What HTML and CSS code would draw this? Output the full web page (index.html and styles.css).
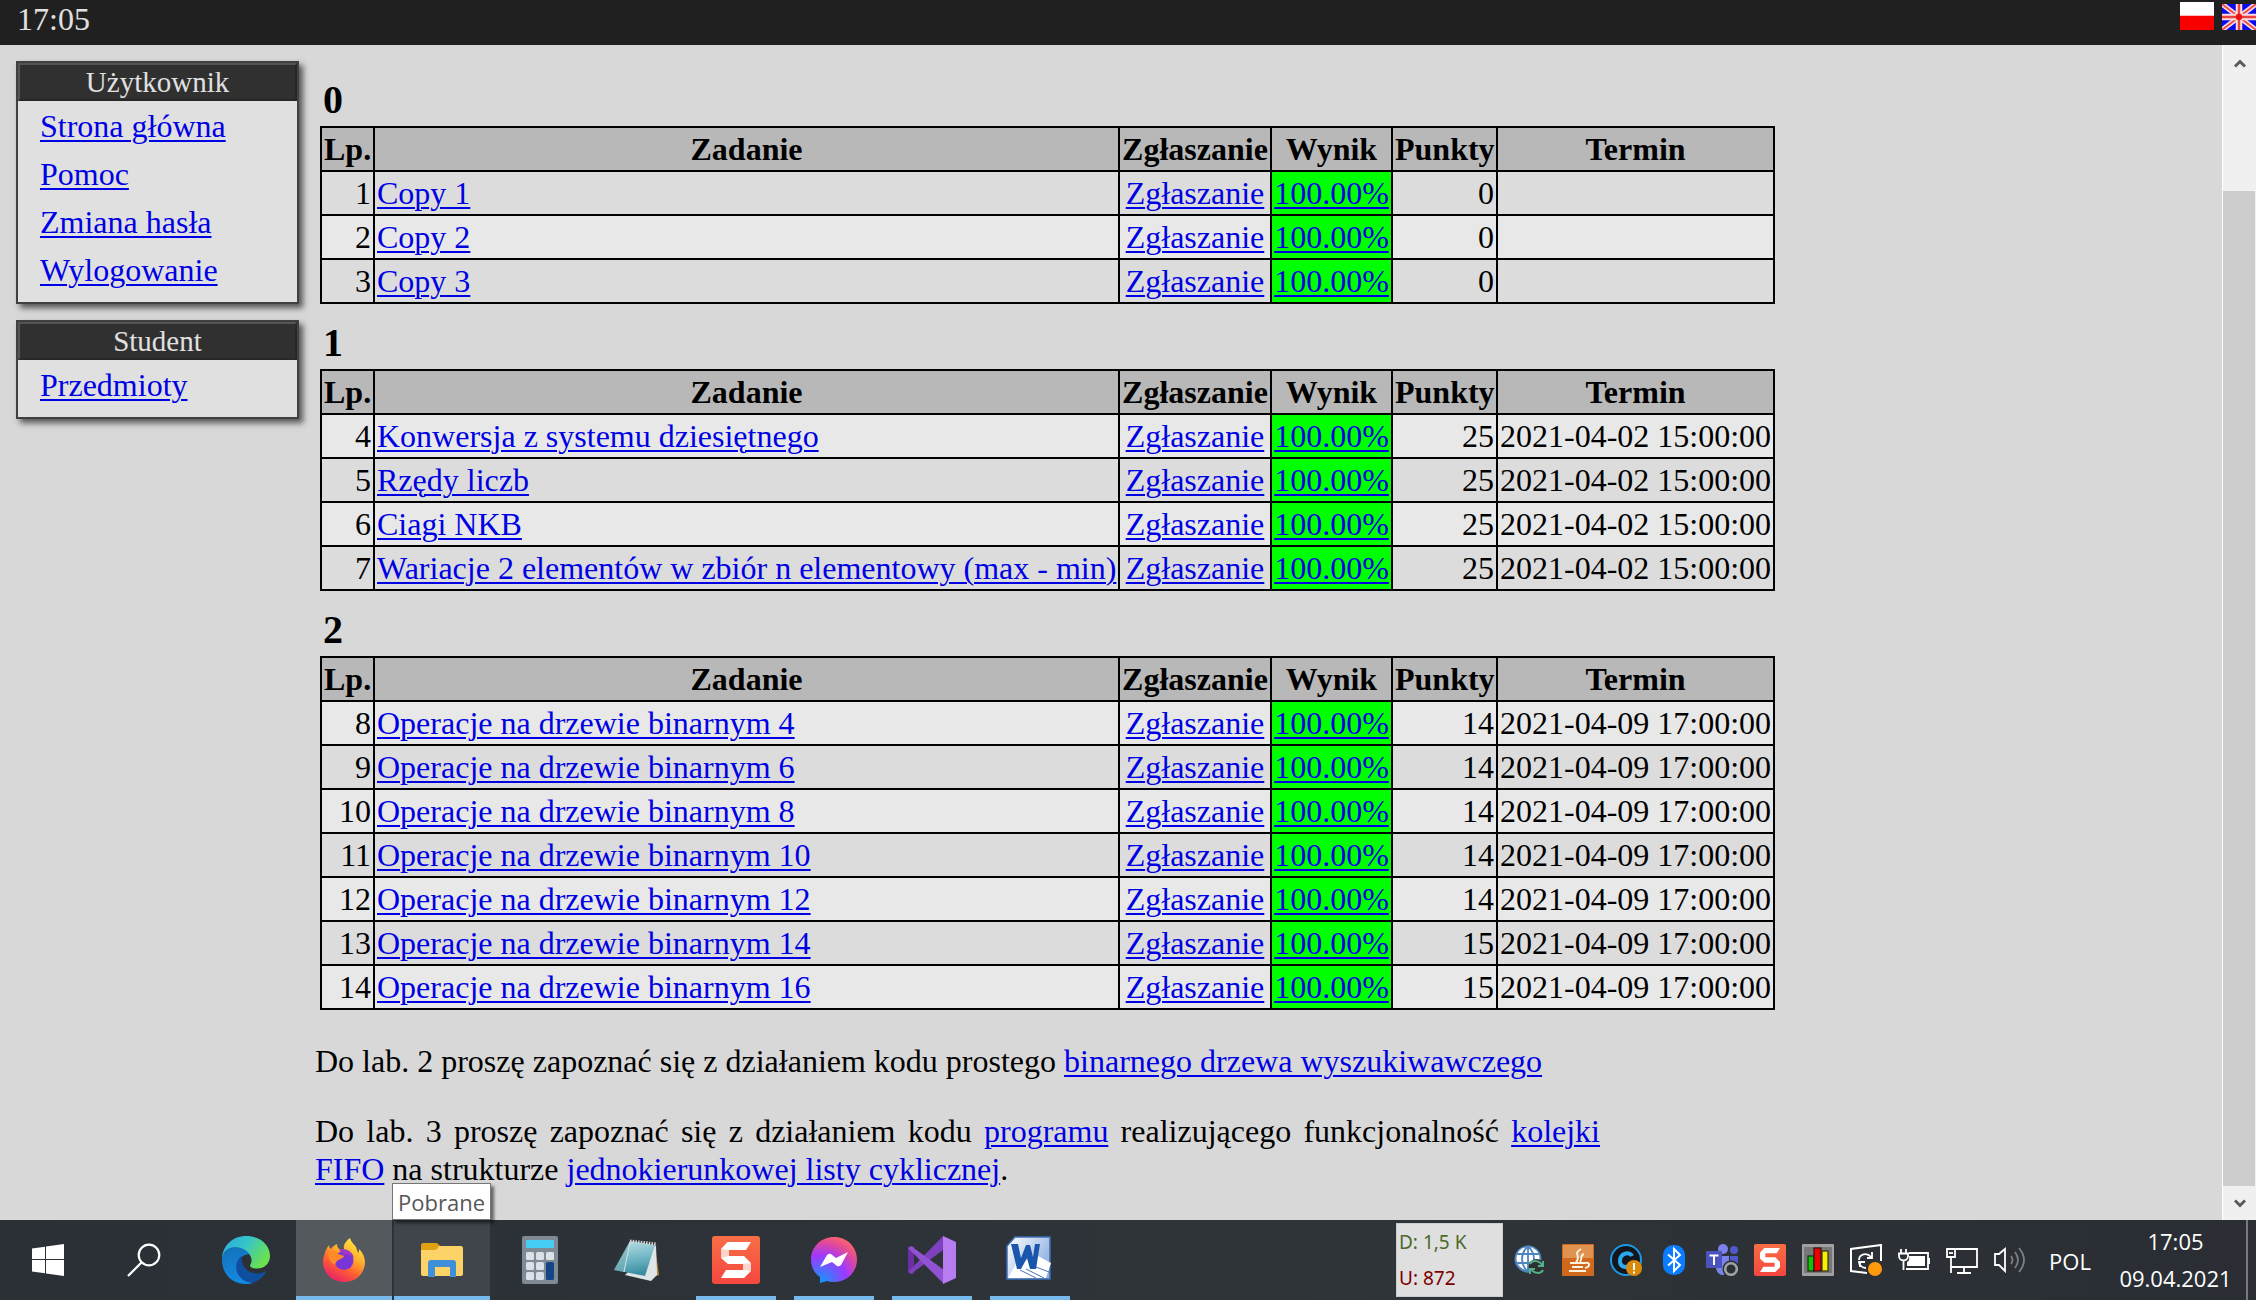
FILE: index.html
```html
<!DOCTYPE html>
<html lang="pl">
<head>
<meta charset="utf-8">
<title>Zadania</title>
<link rel="stylesheet" href="styles.css">
</head>
<body>
<header class="topbar">
  <span class="topbar-time">17:05</span>
  <div class="flags">
    <svg class="flag-pl" viewBox="0 0 34 28"><rect width="34" height="28" fill="#f90000"/><rect width="34" height="14" fill="#fff"/><rect y="13" width="34" height="1" fill="#fbb"/></svg>
    <svg class="flag-uk" viewBox="0 0 34 26"><rect width="34" height="26" fill="#0a0af0"/><path d="M0 0L34 26M34 0L0 26" stroke="#fbdcdc" stroke-width="5"/><path d="M0 0L34 26M34 0L0 26" stroke="#ee4a4a" stroke-width="1.8"/><path d="M17 0V26M0 13H34" stroke="#fbdcdc" stroke-width="6.5"/><path d="M17 0V26M0 13H34" stroke="#ee4040" stroke-width="2.400"/><circle cx="17" cy="13" r="3.2" fill="#f01010"/></svg>
  </div>
</header>
<div class="page">
  <nav class="sidebar">
    <section class="menu">
      <h2 class="menu-title">Użytkownik</h2>
      <ul class="menu-list">
        <li><a href="#">Strona główna</a></li>
        <li><a href="#">Pomoc</a></li>
        <li><a href="#">Zmiana hasła</a></li>
        <li><a href="#">Wylogowanie</a></li>
      </ul>
    </section>
    <section class="menu">
      <h2 class="menu-title">Student</h2>
      <ul class="menu-list">
        <li><a href="#">Przedmioty</a></li>
      </ul>
    </section>
  </nav>
  <main class="content">
    <h3 class="group">0</h3>
    <table class="tasks">
      <colgroup><col class="c-lp"><col class="c-task"><col class="c-send"><col class="c-res"><col class="c-pts"><col class="c-date"></colgroup>
      <tr><th>Lp.</th><th>Zadanie</th><th>Zgłaszanie</th><th>Wynik</th><th>Punkty</th><th>Termin</th></tr>
      <tr class="odd"><td class="num">1</td><td><a href="#">Copy 1</a></td><td class="mid"><a href="#">Zgłaszanie</a></td><td class="ok"><a href="#">100.00%</a></td><td class="num">0</td><td></td></tr>
      <tr><td class="num">2</td><td><a href="#">Copy 2</a></td><td class="mid"><a href="#">Zgłaszanie</a></td><td class="ok"><a href="#">100.00%</a></td><td class="num">0</td><td></td></tr>
      <tr class="odd"><td class="num">3</td><td><a href="#">Copy 3</a></td><td class="mid"><a href="#">Zgłaszanie</a></td><td class="ok"><a href="#">100.00%</a></td><td class="num">0</td><td></td></tr>
    </table>
    <h3 class="group">1</h3>
    <table class="tasks">
      <colgroup><col class="c-lp"><col class="c-task"><col class="c-send"><col class="c-res"><col class="c-pts"><col class="c-date"></colgroup>
      <tr><th>Lp.</th><th>Zadanie</th><th>Zgłaszanie</th><th>Wynik</th><th>Punkty</th><th>Termin</th></tr>
      <tr><td class="num">4</td><td><a href="#">Konwersja z systemu dziesiętnego</a></td><td class="mid"><a href="#">Zgłaszanie</a></td><td class="ok"><a href="#">100.00%</a></td><td class="num">25</td><td>2021-04-02 15:00:00</td></tr>
      <tr class="odd"><td class="num">5</td><td><a href="#">Rzędy liczb</a></td><td class="mid"><a href="#">Zgłaszanie</a></td><td class="ok"><a href="#">100.00%</a></td><td class="num">25</td><td>2021-04-02 15:00:00</td></tr>
      <tr><td class="num">6</td><td><a href="#">Ciagi NKB</a></td><td class="mid"><a href="#">Zgłaszanie</a></td><td class="ok"><a href="#">100.00%</a></td><td class="num">25</td><td>2021-04-02 15:00:00</td></tr>
      <tr class="odd"><td class="num">7</td><td><a href="#">Wariacje 2 elementów w zbiór n elementowy (max - min)</a></td><td class="mid"><a href="#">Zgłaszanie</a></td><td class="ok"><a href="#">100.00%</a></td><td class="num">25</td><td>2021-04-02 15:00:00</td></tr>
    </table>
    <h3 class="group">2</h3>
    <table class="tasks">
      <colgroup><col class="c-lp"><col class="c-task"><col class="c-send"><col class="c-res"><col class="c-pts"><col class="c-date"></colgroup>
      <tr><th>Lp.</th><th>Zadanie</th><th>Zgłaszanie</th><th>Wynik</th><th>Punkty</th><th>Termin</th></tr>
      <tr><td class="num">8</td><td><a href="#">Operacje na drzewie binarnym 4</a></td><td class="mid"><a href="#">Zgłaszanie</a></td><td class="ok"><a href="#">100.00%</a></td><td class="num">14</td><td>2021-04-09 17:00:00</td></tr>
      <tr class="odd"><td class="num">9</td><td><a href="#">Operacje na drzewie binarnym 6</a></td><td class="mid"><a href="#">Zgłaszanie</a></td><td class="ok"><a href="#">100.00%</a></td><td class="num">14</td><td>2021-04-09 17:00:00</td></tr>
      <tr><td class="num">10</td><td><a href="#">Operacje na drzewie binarnym 8</a></td><td class="mid"><a href="#">Zgłaszanie</a></td><td class="ok"><a href="#">100.00%</a></td><td class="num">14</td><td>2021-04-09 17:00:00</td></tr>
      <tr class="odd"><td class="num">11</td><td><a href="#">Operacje na drzewie binarnym 10</a></td><td class="mid"><a href="#">Zgłaszanie</a></td><td class="ok"><a href="#">100.00%</a></td><td class="num">14</td><td>2021-04-09 17:00:00</td></tr>
      <tr><td class="num">12</td><td><a href="#">Operacje na drzewie binarnym 12</a></td><td class="mid"><a href="#">Zgłaszanie</a></td><td class="ok"><a href="#">100.00%</a></td><td class="num">14</td><td>2021-04-09 17:00:00</td></tr>
      <tr class="odd"><td class="num">13</td><td><a href="#">Operacje na drzewie binarnym 14</a></td><td class="mid"><a href="#">Zgłaszanie</a></td><td class="ok"><a href="#">100.00%</a></td><td class="num">15</td><td>2021-04-09 17:00:00</td></tr>
      <tr><td class="num">14</td><td><a href="#">Operacje na drzewie binarnym 16</a></td><td class="mid"><a href="#">Zgłaszanie</a></td><td class="ok"><a href="#">100.00%</a></td><td class="num">15</td><td>2021-04-09 17:00:00</td></tr>
    </table>
    <p class="note">Do lab. 2 proszę zapoznać się z działaniem kodu prostego <a href="#">binarnego drzewa wyszukiwawczego</a></p>
    <p class="note">Do lab. 3 proszę zapoznać się z działaniem kodu <a href="#">programu</a> realizującego funkcjonalność <a href="#">kolejki FIFO</a> na strukturze <a href="#">jednokierunkowej listy cyklicznej</a>.</p>
  </main>
  <div class="scrollbar">
    <svg class="sb-arrow" viewBox="0 0 12 10"><path d="M1 8.5L6 3.5L11 8.5" fill="none" stroke="#5a5a5a" stroke-width="3"/></svg>
    <div class="thumb"></div>
    <svg class="sb-arrow" viewBox="0 0 12 10"><path d="M1 1.5L6 6.5L11 1.5" fill="none" stroke="#5a5a5a" stroke-width="3"/></svg>
  </div>
</div>
<footer class="taskbar">
  <div class="sys">
    <svg width="32" height="32" viewBox="0 0 32 32" fill="#fff"><path d="M0 4.6L13 2.8V15H0ZM14 2.6L32 0V15H14ZM0 16H13V29.2L0 27.4ZM14 16H32V32L14 29.4Z"/></svg>
  </div>
  <div class="sys">
    <svg width="34" height="34" viewBox="0 0 34 34" fill="none" stroke="#fff" stroke-width="2.2"><circle cx="22" cy="12" r="10.3"/><path d="M14.5 19.5L1 33"/></svg>
  </div>
  <div class="apps">
    <div class="app">
      <svg width="48" height="48" viewBox="0 0 48 48">
        <defs>
          <linearGradient id="eg" x1="0" y1="0" x2="1" y2="0.5"><stop offset="0" stop-color="#2fa8e0"/><stop offset=".5" stop-color="#35c5c8"/><stop offset="1" stop-color="#6be050"/></linearGradient>
          <linearGradient id="eb" x1="0" y1="0" x2="0.3" y2="1"><stop offset="0" stop-color="#1470b8"/><stop offset="1" stop-color="#1389e0"/></linearGradient>
        </defs>
        <path d="M0 22C1 9 11 0 24 0C38 0 48 9 48 20C48 28 42 32.5 35 32.5C30 32.5 27.5 31 28 29C30 27 30.5 22 27 18C22 12 5 12 0 22Z" fill="url(#eg)"/>
        <path d="M0 24C0 16 6 11 13 11C20 11 26 15 28 19C22 17 18 22 18 27C18 37 26 46 31 47C28 48 26 48 24 48C10 48 0 38 0 24Z" fill="url(#eb)"/>
        <path d="M20 20C11 25 11 44 30 47C37 45 42 40 44 36C43 35 42 36 41 36.4C31 40 18 34 20 20Z" fill="#0f4fa0"/>
      </svg>
    </div>
    <div class="app active current">
      <svg width="42" height="44" viewBox="0 0 42 44">
        <defs><linearGradient id="ff" x1="0.85" y1="0" x2="0.3" y2="1"><stop offset="0" stop-color="#fff44a"/><stop offset=".4" stop-color="#ffae2a"/><stop offset=".7" stop-color="#ff5a35"/><stop offset="1" stop-color="#e8206c"/></linearGradient></defs>
        <path d="M1 18C2 14 3 11 6 7C6 9 7 10 8 11C10 8 12 7 14 6C14 9 15 11 18 12C20 12 21 11 21 11C20 7 23 3 27 0C28 4 31 6 33 9L35 15C36 14 36 12 36 11C41 16 42 21 42 25C41 37 32 44 21 44C9 44 0 35 0 24C0 22 0 20 1 18Z" fill="url(#ff)"/>
        <circle cx="21" cy="22.5" r="9.5" fill="#7a35d8"/>
        <path d="M16 12C22 9 30 14 31 20C28 17 24 16 21 17Z" fill="#a236c8"/>
        <path d="M5 14C9 11 14 13 15 16C17 17 20 17 21 18C20 21 16 21 14 23C12 26 11 27 11 27C8 24 5 20 5 14Z" fill="#ff8a28"/>
      </svg>
    </div>
    <div class="app active hover">
      <svg width="42" height="34" viewBox="0 0 42 34">
        <path d="M0 2Q0 0 2 0H15Q17 0 18 2L20 4V10H0Z" fill="#dea112"/>
        <path d="M0 7H14Q17 6 18 3H40Q42 3 42 5V31Q42 33 40 33H2Q0 33 0 31Z" fill="#fdd367"/>
        <path d="M7 34V20Q7 17 10 17H32Q35 17 35 20V34H29V24H14V34Z" fill="#3f90d8"/>
      </svg>
      <span class="tooltip">Pobrane</span>
    </div>
    <div class="app">
      <svg width="36" height="48" viewBox="0 0 36 48">
        <rect width="36" height="48" rx="2" fill="#7f8a94"/><rect x="4" y="4" width="28" height="8" rx="1" fill="#45cdf5"/>
        <g fill="#dbe1e8"><rect x="4" y="16" width="8" height="8" rx="1.5"/><rect x="14" y="16" width="8" height="8" rx="1.5"/><rect x="24" y="16" width="8" height="8" rx="1.5"/><rect x="4" y="26" width="8" height="8" rx="1.5"/><rect x="14" y="26" width="8" height="8" rx="1.5"/><rect x="4" y="36" width="8" height="8" rx="1.5"/><rect x="14" y="36" width="8" height="8" rx="1.5"/></g>
        <rect x="24" y="26" width="8" height="18" rx="1.5" fill="#144584"/>
      </svg>
    </div>
    <div class="app">
      <svg class="notepad" width="46" height="42" viewBox="0 0 46 42">
        <defs><linearGradient id="np" x1="0" y1="0" x2="0.2" y2="1"><stop offset="0" stop-color="#bfe0e6"/><stop offset=".6" stop-color="#6fb5c4"/><stop offset="1" stop-color="#3b8fa2"/></linearGradient></defs>
        <path d="M41 7L45 36L38 38Z" fill="#b58b43"/><path d="M42 6L43 36L37 42L11 36Z" fill="#dfe5e6"/>
        <path d="M16 2L41 6L31 37L0 31Z" fill="url(#np)"/><path d="M16 3L10 33L0 31Z" fill="#7fb0b8" opacity=".6"/><path d="M16 3L10 33" stroke="#cfe6ea"/>
        <path d="M16 2L42 5" stroke="#d5d5d5" stroke-width="3" stroke-dasharray="1.5 1.2"/>
      </svg>
    </div>
    <div class="app active">
      <svg width="48" height="48" viewBox="0 0 48 48">
        <defs><linearGradient id="sn" x1="0" y1="0" x2="0" y2="1"><stop offset="0" stop-color="#f86e45"/><stop offset="1" stop-color="#f5473f"/></linearGradient></defs>
        <rect width="48" height="48" rx="3" fill="url(#sn)"/>
        <path d="M9 13L15.5 6H39L34 14H17V20H32L39 27V35L32 42H9L14 34H31V28H16L9 22Z" fill="#fff"/>
        <path d="M9 13L17 14V20L9 22Z" fill="#fbd5cc"/><path d="M31 28L39 27V35L31 34Z" fill="#fbd5cc"/>
      </svg>
    </div>
    <div class="app active">
      <svg width="46" height="46" viewBox="0 0 46 46">
        <defs><radialGradient id="ms" cx=".2" cy="1" r="1.1"><stop offset="0" stop-color="#0a9bff"/><stop offset=".55" stop-color="#a038ff"/><stop offset=".8" stop-color="#e0489c"/><stop offset="1" stop-color="#ff6668"/></radialGradient></defs>
        <path d="M23 0C36 0 46 10 46 22.5S36 45 23 45C20 45 18 44.8 16 44L9 46V40C3 36 0 30 0 22.5C0 10 10 0 23 0Z" fill="url(#ms)"/>
        <path d="M9 30L16 18Q18 16 20 17L25 21L37 15L30 28Q28 30 26 29L21 25Z" fill="#fff"/>
      </svg>
    </div>
    <div class="app active">
      <svg width="48" height="48" viewBox="0 0 48 48">
        <path d="M0 12L6 10V38L0 36Z" fill="#6a2fa5"/><path d="M3 38L0 36L35 0V14Z" fill="#7e40be"/><path d="M0 12L3 10L36 34V48Z" fill="#9153d4"/><path d="M35 0L48 6V42L35 48Z" fill="#b77df0"/>
      </svg>
    </div>
    <div class="app active">
      <svg class="word" width="46" height="44" viewBox="0 0 46 44">
        <defs><linearGradient id="wd" x1="0" y1="0" x2="1" y2="0.6"><stop offset="0" stop-color="#fff"/><stop offset="1" stop-color="#8eb0e2"/></linearGradient></defs>
        <path d="M1 10L9 1H44V43H1Z" fill="url(#wd)" stroke="#3c6db8" stroke-width="1.5"/><path d="M32 20L45 27L40 42H2L10 28Z" fill="#fff"/><path d="M14 34L30 42M30 31L43 36M20 33L38 42" stroke="#496fb5"/>
        <path d="M5 8H12L15 22L20 9H24L27 21L29 8H34L30 33H24L21 22L15 33H11Z" fill="#1b56ad"/>
      </svg>
    </div>
  </div>
  <div class="net"><span class="down">D: 1,5 K</span><span class="up">U: 872</span></div>
  <div class="tray">
    <svg viewBox="0 0 32 32"><circle cx="14" cy="15" r="13.5" fill="#4e86bf"/><circle cx="14" cy="14.5" r="11.5" fill="#fff"/><path d="M14 2V28M2 10H26M2 19H26M14 2C6 10 6 20 14 28M14 2C22 10 22 20 14 28" stroke="#4e86bf" stroke-width="1.8" fill="none"/><circle cx="22.5" cy="23" r="8" fill="#2d3035"/><path d="M16 20C18 16 25 16 28 21M29 17V22H24M29 26C27 30 20 30 17 25M16 30V25H21" fill="none" stroke="#55b088" stroke-width="2"/></svg>
    <svg viewBox="0 0 32 32"><rect width="32" height="32" rx="1" fill="#d0691b"/><rect x="1" y="1" width="30" height="13" fill="#e09350"/><path d="M19 5C10 10 20 12 14 18M22 10C17 12 21 14 18 18M8 19H23M10 23H21M7 27H24M23 19C29 18 28 23 23 24" stroke="#fff1e0" stroke-width="2" fill="none"/></svg>
    <svg viewBox="0 0 32 32"><circle cx="16" cy="16" r="15" fill="#14161b" stroke="#1a9ae8" stroke-width="2"/><path d="M22 12C20 7 10 9 10 17C10 24 17 24 20 21" fill="none" stroke="#29a9f2" stroke-width="4"/><circle cx="24" cy="24" r="8" fill="#d98a0c"/><path d="M24 19V26M24 27.5V29.5" stroke="#fff" stroke-width="2"/></svg>
    <svg viewBox="0 0 32 32"><rect x="5" y="1" width="22" height="30" rx="10" fill="#0a7cff"/><path d="M10 10.5L22 21L16 27V5L22 11L10 21.5" fill="none" stroke="#fff" stroke-width="2"/></svg>
    <svg viewBox="0 0 32 32"><circle cx="17" cy="5" r="5" fill="#7b83eb"/><circle cx="28" cy="6" r="4" fill="#5059c9"/><path d="M12 12H23V26Q20 31 16 31Q11 30 10 24Z" fill="#7b83eb"/><path d="M24 12H32V20Q29 26 24 22Z" fill="#5059c9"/><rect x="0" y="7" width="16" height="17" rx="1" fill="#4b53bc"/><path d="M3.5 11.5H12.5M8 11.5V21" stroke="#fff" stroke-width="2"/><circle cx="25" cy="25" r="8.5" fill="#2c3035"/><circle cx="25" cy="25" r="5.8" fill="none" stroke="#a0a3a6" stroke-width="2.5"/></svg>
    <svg viewBox="0 0 48 48"><rect width="48" height="48" rx="3" fill="url(#sn)"/><path d="M9 13L15.5 6H39L34 14H17V20H32L39 27V35L32 42H9L14 34H31V28H16L9 22Z" fill="#fff"/></svg>
    <svg viewBox="0 0 32 32"><rect width="32" height="32" rx="1" fill="#a0a0a0"/><rect x="2" y="3" width="28" height="26" fill="#777"/><rect x="6" y="12" width="6" height="15" fill="#0fc400" stroke="#131" stroke-width="1.2"/><rect x="12" y="4" width="7" height="23" fill="#f20000" stroke="#311" stroke-width="1.2"/><rect x="20" y="7" width="6" height="20" fill="#f7ee00" stroke="#331" stroke-width="1.2"/></svg>
    <svg viewBox="0 0 32 32" fill="none" stroke="#fff" stroke-width="2"><path d="M31 17V1L1 5V27L17 29"/><path d="M9 16C9 10 17 8 21 13M22 8V14H17M10 17V23M16 24C12 24 9 21 9 18H15" stroke-width="1.8"/><circle cx="25" cy="25" r="7" fill="#ff9a0c" stroke="none"/></svg>
    <svg viewBox="0 0 32 32" fill="none" stroke="#fff" stroke-width="1.8"><path d="M3 5V9M8 5V9M1 9.5H10V12C10 18 1 18 1 12ZM5.5 17V26M11 9H30V25H8"/><path d="M11 12H27V22H9V18Q12 17 11 12Z" fill="#fff" stroke="none"/><path d="M31 14V20" stroke-width="2"/></svg>
    <svg viewBox="0 0 32 32" fill="none" stroke="#fff" stroke-width="1.8"><path d="M10 5H31V23H5M1 5H9V13H1ZM5 13V29M18 23V28M11 29H25"/><path d="M3 9H7"/></svg>
    <svg viewBox="0 0 32 32" fill="none" stroke="#fff" stroke-width="1.8"><path d="M1 10H5L11 5V27L5 21H1Z"/><path d="M17 12Q20 16 17 20M21 8Q27 16 21 24M25 4Q35 16 25 28" stroke="#7d8084"/></svg>
  </div>
  <div class="lang">POL</div>
  <div class="clock"><span>17:05</span><span>09.04.2021</span></div>
  <div class="desktop"></div>
</footer>
</body>
</html>
```
FILE: styles.css
```css
* { box-sizing: border-box; }
body {
  margin: 0;
  width: 2256px;
  height: 1300px;
  overflow: hidden;
  display: grid;
  grid-template-rows: 45px 1175px 80px;
  background: #d8d8d8;
  color: #000;
  font: 32px/37px "Liberation Serif", serif;
}
a { color: #0000e4; text-underline-offset: 3px; text-decoration-thickness: 2px; }
svg { display: block; }

.topbar { background: #202020; color: #e0e0e0; display: flex; justify-content: space-between; padding-left: 17px; }
.topbar-time { line-height: 39px; }
.flags { display: flex; gap: 8px; }
.flag-pl { width: 34px; height: 28px; margin-top: 2px; }
.flag-uk { width: 34px; height: 26px; margin-top: 4px; }

.page { display: flex; }
.sidebar { width: 299px; padding: 16px 0 0 16px; display: flex; flex-direction: column; gap: 16px; }
.menu { border: 2px solid #404040; background: #e0e0e0; box-shadow: 4px 4px 6px #555; }
.menu-title {
  margin: 0;
  height: 38px;
  padding-top: 1px;
  border: 2px solid #282828;
  border-top-color: #555;
  border-left-color: #555;
  background: #303030;
  color: #e0e0e0;
  font-size: 29px;
  line-height: 33px;
  font-weight: normal;
  text-align: center;
}
.menu-list { list-style: none; margin: 0; padding: 2px 22px 7px; }
.menu-list li { height: 48px; line-height: 47px; }

.content { flex: 1; padding: 32px 0 0 21px; }
.group { margin: 0 0 0 3px; height: 49px; font-size: 40px; line-height: 46px; }
.tasks { table-layout: fixed; width: 1455px; border-collapse: collapse; margin-bottom: 16px; background: #e8e8e8; }
.c-lp { width: 53px; }
.c-task { width: 745px; }
.c-send { width: 152px; }
.c-res { width: 121px; }
.c-pts { width: 105px; }
.c-date { width: 277px; }
.tasks tr { height: 44px; }
.tasks th, .tasks td { border: 2px solid #000; padding: 1px 2px 0; white-space: nowrap; }
.tasks th { background: #b8b8b8; }
.odd { background: #dcdcdc; }
.num { text-align: right; }
.mid { text-align: center; }
.tasks .ok { background: #00ff00; text-align: center; }
.note { width: 1285px; margin: 32px 0 0 -5px; line-height: 38px; text-align: justify; }

.scrollbar { width: 34px; border-left: 1px solid #fff; background: #f0f0f0; display: flex; flex-direction: column; align-items: center; padding: 13px 0 11px; }
.sb-arrow { width: 12px; height: 10px; }
.thumb { width: 32px; height: 995px; margin: 123px 1px auto 0; background: #cdcdcd; }

.taskbar { background: linear-gradient(90deg, #2a3036, #2f3439 60%, #2a2e34); display: flex; align-items: stretch; font-family: "Open Sans", "Noto Sans", sans-serif; color: #fff; }
.sys { width: 96px; display: flex; align-items: center; justify-content: center; }
.apps { display: flex; margin-left: 6px; gap: 2px; width: 1198px; }
.app { width: 96px; display: flex; align-items: center; justify-content: center; position: relative; }
.active { background: linear-gradient(#76b9ed, #76b9ed) bottom / 80px 4px no-repeat; }
.current { background-color: #54595e; background-size: 96px 4px; }
.hover { background-color: #3f454a; background-size: 96px 4px; }
.word { margin: 0 2px 4px 0; }
.notepad { margin-right: 3px; }
.tooltip {
  position: absolute;
  left: -2px;
  top: -37px;
  width: 99px;
  height: 37px;
  border: 1px solid #767676;
  background: #fff;
  color: #575757;
  font-size: 22px;
  line-height: 37px;
  text-align: center;
  box-shadow: 3px 3px 3px #0008;
}
.net { width: 107px; height: 74px; margin-top: 3px; background: #dfdfdf; border: 1px solid #ccc; padding-left: 2px; font: 19px/36px "Noto Sans", sans-serif; display: flex; flex-direction: column; }
.down { color: #4a6a2c; }
.up { color: #7b0000; }
.tray { display: flex; align-items: center; gap: 16px; padding-left: 11px; width: 546px; }
.tray svg { width: 32px; height: 32px; flex: none; }
.lang { width: 42px; font-size: 22px; line-height: 82px; text-align: center; }
.clock { width: 155px; padding-left: 14px; padding-top: 3px; display: flex; flex-direction: column; text-align: center; font-size: 22px; line-height: 37px; }
.desktop { width: 2px; background: #77797c; }
```
